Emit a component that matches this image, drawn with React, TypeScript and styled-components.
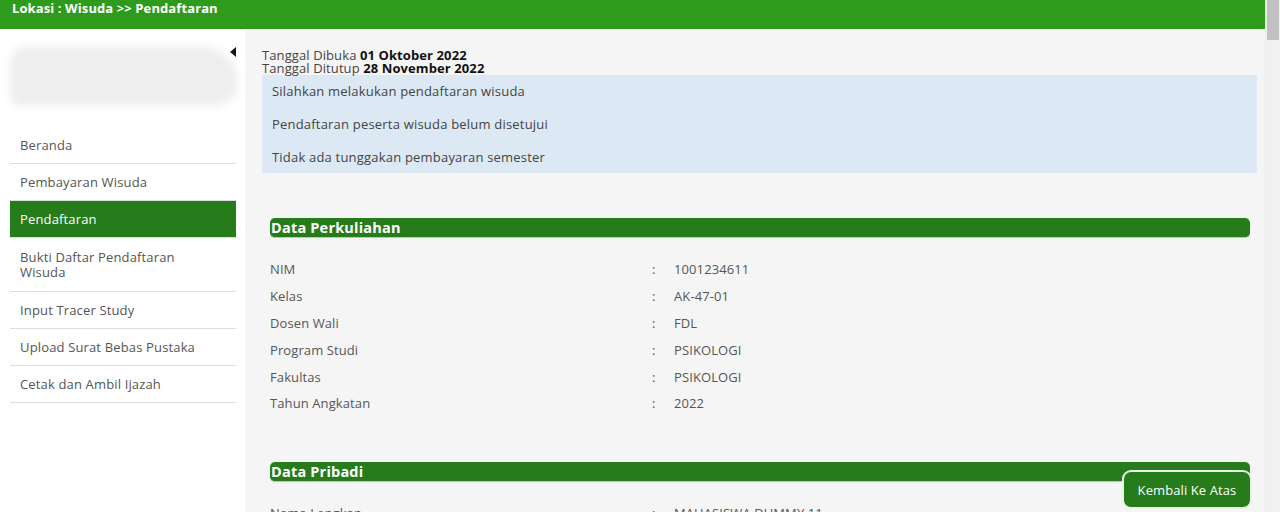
import React from "react";
import styled, { createGlobalStyle } from "styled-components";

const Global = createGlobalStyle`
  html, body { margin: 0; padding: 0; overflow: hidden; }
  body {
    font-family: "Open Sans", "Liberation Sans", sans-serif;
    background: #f5f5f5;
    color: #555;
  }
  * { box-sizing: border-box; }
`;

const Frame = styled.div`
  display: flex;
  height: 100vh;
`;

const Shell = styled.div`
  flex: 1;
  overflow-y: auto;
  scrollbar-width: none;
`;

const ScrollRail = styled.div`
  width: 15px;
  flex: none;
  background: #f1f1f1;
  border-left: 1px solid #ececec;
`;

const ScrollThumb = styled.div`
  height: 40px;
  margin: 0 1px;
  background: #c1c1c1;
`;

const TopBar = styled.div`
  height: 29px;
  background: #2e9b1c;
  color: #fff;
  font-weight: 700;
  font-size: 13px;
  letter-spacing: 0.1px;
  display: flex;
  align-items: flex-start;
  padding: 1px 12px 0;
  line-height: 15px;
`;

const Layout = styled.div`
  display: flex;
  min-height: 6500px;
`;

const Sidebar = styled.aside`
  width: 245px;
  flex: none;
  background: #fff;
  padding: 0 9px 0 10px;
`;

const Brand = styled.div`
  position: relative;
  height: 98px;
  padding-top: 17px;
`;

const Toggle = styled.span`
  position: absolute;
  right: 0;
  top: 18px;
  width: 0;
  height: 0;
  border-top: 5px solid transparent;
  border-bottom: 5px solid transparent;
  border-right: 6px solid #111;
`;

const Blur = styled.div`
  height: 60px;
  width: 228px;
  border-radius: 18px 40px 26px 12px;
  background: #eeeeee;
  filter: blur(4px);
`;

const Menu = styled.nav`
  display: flex;
  flex-direction: column;
`;

const Item = styled.a<{ $active?: boolean; $tall?: boolean }>`
  display: flex;
  align-items: center;
  padding: 1px 10px 0;
  font-size: 13px;
  line-height: 15px;
  letter-spacing: 0.15px;
  min-height: ${(p) => (p.$tall ? 54 : 37)}px;
  color: ${(p) => (p.$active ? "#fff" : "#555")};
  background: ${(p) => (p.$active ? "#267b1b" : "transparent")};
  border-bottom: 1px solid ${(p) => (p.$active ? "#cfe8c8" : "#dedede")};
  text-decoration: none;
`;

const Main = styled.main`
  flex: 1;
  padding: 20px 8px 0 17px;
  background: #f5f5f5;
`;

const Dates = styled.div`
  font-size: 13px;
  line-height: 13px;
  color: #444;
  letter-spacing: 0.1px;
  b { color: #111; font-weight: 700; }
`;

const Info = styled.div`
  background: #dce9f5;
  padding: 6px 10px;
  font-size: 13px;
  letter-spacing: 0.2px;
  color: #444;
  p { margin: 0 0 13px; line-height: 20px; }
  p:last-child { margin-bottom: 0; }
`;

const Section = styled.section<{ $top: number }>`
  padding: 0 7px 0 8px;
  margin-top: ${(p) => p.$top}px;
`;

const Header = styled.h3`
  margin: 0;
  height: 20px;
  background: #267b1b;
  border-radius: 5px;
  border-bottom: 1px solid #a8d89c;
  color: #fff;
  font-size: 14.5px;
  font-weight: 700;
  letter-spacing: 0.2px;
  line-height: 19px;
  padding-left: 1px;
`;

const Rows = styled.div`
  margin-top: 18px;
  display: grid;
  grid-template-columns: 382px 22px 1fr;
  grid-auto-rows: 26.8px;
  align-items: center;
  font-size: 13px;
  letter-spacing: 0.1px;
  color: #555;
`;

const Colon = styled.span`
  color: #555;
`;

const BackTop = styled.button`
  position: fixed;
  right: 28px;
  bottom: 3px;
  width: 130px;
  height: 39px;
  background: #267b1b;
  color: #fff;
  border: 2px solid #e9f3e6;
  border-radius: 9px;
  font-family: inherit;
  font-size: 13px;
  letter-spacing: 0.1px;
  cursor: pointer;
`;

const kuliah = [
  ["NIM", "1001234611"],
  ["Kelas", "AK-47-01"],
  ["Dosen Wali", "FDL"],
  ["Program Studi", "PSIKOLOGI"],
  ["Fakultas", "PSIKOLOGI"],
  ["Tahun Angkatan", "2022"],
];

const pribadi = [
  ["Nama Lengkap", "MAHASISWA DUMMY 11"],
  ["Tempat Lahir", "BANDUNG"],
  ["Tanggal Lahir", "01 Januari 2000"],
  ["Jenis Kelamin", "Laki-laki"],
  ["Agama", "ISLAM"],
];

const menu = [
  "Beranda",
  "Pembayaran Wisuda",
  "Pendaftaran",
  "Bukti Daftar Pendaftaran Wisuda",
  "Input Tracer Study",
  "Upload Surat Bebas Pustaka",
  "Cetak dan Ambil Ijazah",
];

export default function App() {
  return (
    <>
      <Global />
      <Frame>
        <Shell>
          <TopBar>Lokasi : Wisuda &gt;&gt; Pendaftaran</TopBar>
          <Layout>
            <Sidebar>
              <Brand>
                <Toggle />
                <Blur />
              </Brand>
              <Menu>
                {menu.map((m) => {
                  const tall = m === "Bukti Daftar Pendaftaran Wisuda";
                  return (
                    <Item key={m} $active={m === "Pendaftaran"} $tall={tall}>
                      {tall ? (
                        <span>
                          Bukti Daftar Pendaftaran
                          <br />
                          Wisuda
                        </span>
                      ) : (
                        m
                      )}
                    </Item>
                  );
                })}
              </Menu>
            </Sidebar>
            <Main>
              <Dates>
                Tanggal Dibuka <b>01 Oktober 2022</b>
                <br />
                Tanggal Ditutup <b>28 November 2022</b>
              </Dates>
              <Info>
                <p>Silahkan melakukan pendaftaran wisuda</p>
                <p>Pendaftaran peserta wisuda belum disetujui</p>
                <p>Tidak ada tunggakan pembayaran semester</p>
              </Info>
              <Section $top={45}>
                <Header>Data Perkuliahan</Header>
                <Rows>
                  {kuliah.map(([k, v]) => (
                    <React.Fragment key={k}>
                      <span>{k}</span>
                      <Colon>:</Colon>
                      <span>{v}</span>
                    </React.Fragment>
                  ))}
                </Rows>
              </Section>
              <Section $top={45}>
                <Header>Data Pribadi</Header>
                <Rows>
                  {pribadi.map(([k, v]) => (
                    <React.Fragment key={k}>
                      <span>{k}</span>
                      <Colon>:</Colon>
                      <span>{v}</span>
                    </React.Fragment>
                  ))}
                </Rows>
              </Section>
            </Main>
          </Layout>
        </Shell>
        <ScrollRail>
          <ScrollThumb />
        </ScrollRail>
      </Frame>
      <BackTop>Kembali Ke Atas</BackTop>
    </>
  );
}
